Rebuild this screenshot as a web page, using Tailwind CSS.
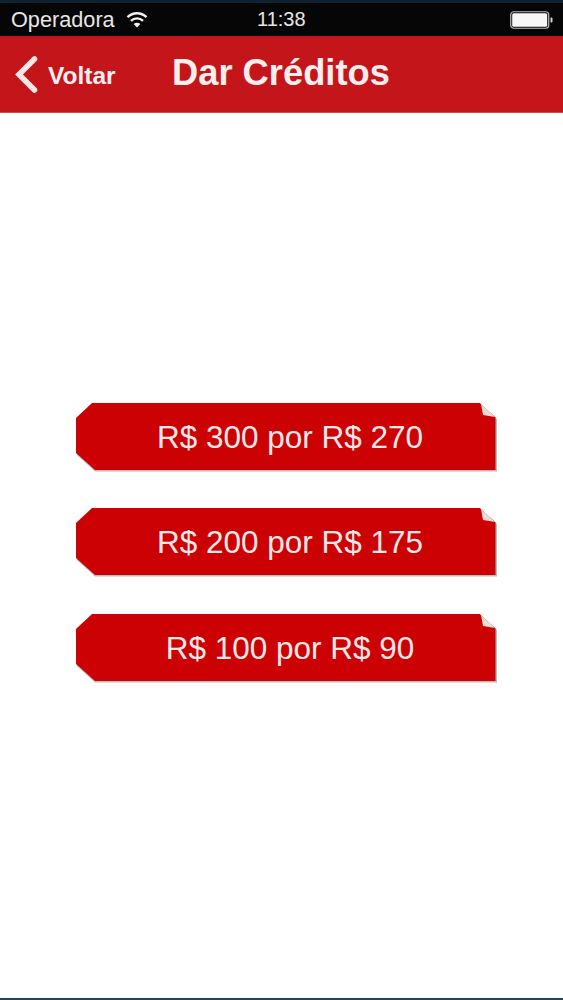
<!DOCTYPE html>
<html lang="pt-BR">
<head>
<meta charset="utf-8">
<title>Dar Créditos</title>
<script src="https://cdn.jsdelivr.net/npm/@tailwindcss/browser@4"></script>
</head>
<body class="bg-white">
<div class="w-[563px] h-[1000px] flex flex-col overflow-hidden bg-white font-['Liberation_Sans',Arial,sans-serif]">
  <div class="h-[3px] bg-[#10222f]"></div>
  <div class="h-[33px] bg-[#060606] text-[#e6e6e6] flex items-center justify-between pl-[11px] pr-[10px] relative">
    <div class="flex items-center gap-[11px]">
      <span class="text-[21.7px] leading-none">Operadora</span>
      <svg width="22" height="17" viewBox="0 0 22 17" fill="none" stroke="#f2f2f2" stroke-width="2.4">
        <path d="M1.5 6.2 C6.8 1 15.2 1 20.5 6.2"/>
        <path d="M5 9.8 C8.4 6.6 13.6 6.6 17 9.8"/>
        <path d="M11 16.5 L7.6 13 C9.6 11.2 12.4 11.2 14.4 13 Z" fill="#f2f2f2" stroke="none"/>
      </svg>
    </div>
    <span class="absolute left-[257px] top-[5px] text-[20px] leading-[22px]">11:38</span>
    <svg width="43" height="18" viewBox="0 0 43 18">
      <rect x="0.75" y="0.75" width="38" height="16.5" rx="3" fill="none" stroke="#bdbdbd" stroke-width="1.2"/>
      <rect x="2.2" y="2.2" width="35" height="13.6" rx="1.5" fill="#f7f7f7"/>
      <path d="M40.5 6.5 h1 a1 1 0 0 1 1 1 v3 a1 1 0 0 1 -1 1 h-1 Z" fill="#cfcfcf"/>
    </svg>
  </div>
  <div class="h-[77px] bg-[#c4161a] border-b border-[#d8484a] text-[#fdeeee] relative flex items-center pl-[15px]">
    <svg width="23" height="38" viewBox="0 0 23 38" fill="none" stroke="#fbe6e6" stroke-width="5.5" stroke-linecap="round">
      <path d="M19.5 4 L4 19.5 L19.5 35"/>
    </svg>
    <span class="ml-[10px] mt-[5px] text-[24.5px] font-bold leading-none">Voltar</span>
    <span class="absolute left-[172px] top-[17px] text-[36.3px] font-bold leading-[40px]">Dar Créditos</span>
  </div>
  <div class="flex-1 flex flex-col items-start pl-[76px] pt-[290px]">
    <button class="relative w-[420px] h-[67px] flex items-center justify-center text-[#fbe9e9] text-[31.5px] leading-none pl-[8px] pt-[2px]">
      <svg class="absolute inset-0" width="422" height="69" viewBox="0 0 422 69">
        <path d="M16 1.5 L405 1.5 L421 16 L421 68.5 L19 68.5 L1 52 L1 16 Z" fill="#8f8a8a" opacity="0.6"/>
        <path d="M16 0 L404 0 L419.5 14 L419.5 67 L19 67 L0 50 L0 15 Z" fill="#cb0103"/>
        <path d="M404 0 L421 0 L421 15.5 Z" fill="#ffffff"/>
        <path d="M405 1 L419 14 L407 12 Z" fill="#ecdcd6"/>
      </svg>
      <span class="relative">R$ 300 por R$ 270</span>
    </button>
    <button class="relative mt-[38px] w-[420px] h-[67px] flex items-center justify-center text-[#fbe9e9] text-[31.5px] leading-none pl-[8px] pt-[2px]">
      <svg class="absolute inset-0" width="422" height="69" viewBox="0 0 422 69">
        <path d="M16 1.5 L405 1.5 L421 16 L421 68.5 L19 68.5 L1 52 L1 16 Z" fill="#8f8a8a" opacity="0.6"/>
        <path d="M16 0 L404 0 L419.5 14 L419.5 67 L19 67 L0 50 L0 15 Z" fill="#cb0103"/>
        <path d="M404 0 L421 0 L421 15.5 Z" fill="#ffffff"/>
        <path d="M405 1 L419 14 L407 12 Z" fill="#ecdcd6"/>
      </svg>
      <span class="relative">R$ 200 por R$ 175</span>
    </button>
    <button class="relative mt-[39px] w-[420px] h-[67px] flex items-center justify-center text-[#fbe9e9] text-[31.5px] leading-none pl-[8px] pt-[2px]">
      <svg class="absolute inset-0" width="422" height="69" viewBox="0 0 422 69">
        <path d="M16 1.5 L405 1.5 L421 16 L421 68.5 L19 68.5 L1 52 L1 16 Z" fill="#8f8a8a" opacity="0.6"/>
        <path d="M16 0 L404 0 L419.5 14 L419.5 67 L19 67 L0 50 L0 15 Z" fill="#cb0103"/>
        <path d="M404 0 L421 0 L421 15.5 Z" fill="#ffffff"/>
        <path d="M405 1 L419 14 L407 12 Z" fill="#ecdcd6"/>
      </svg>
      <span class="relative">R$ 100 por R$ 90</span>
    </button>
  </div>
  <div class="h-[2px] bg-[#24465a]"></div>
</div>
</body>
</html>
